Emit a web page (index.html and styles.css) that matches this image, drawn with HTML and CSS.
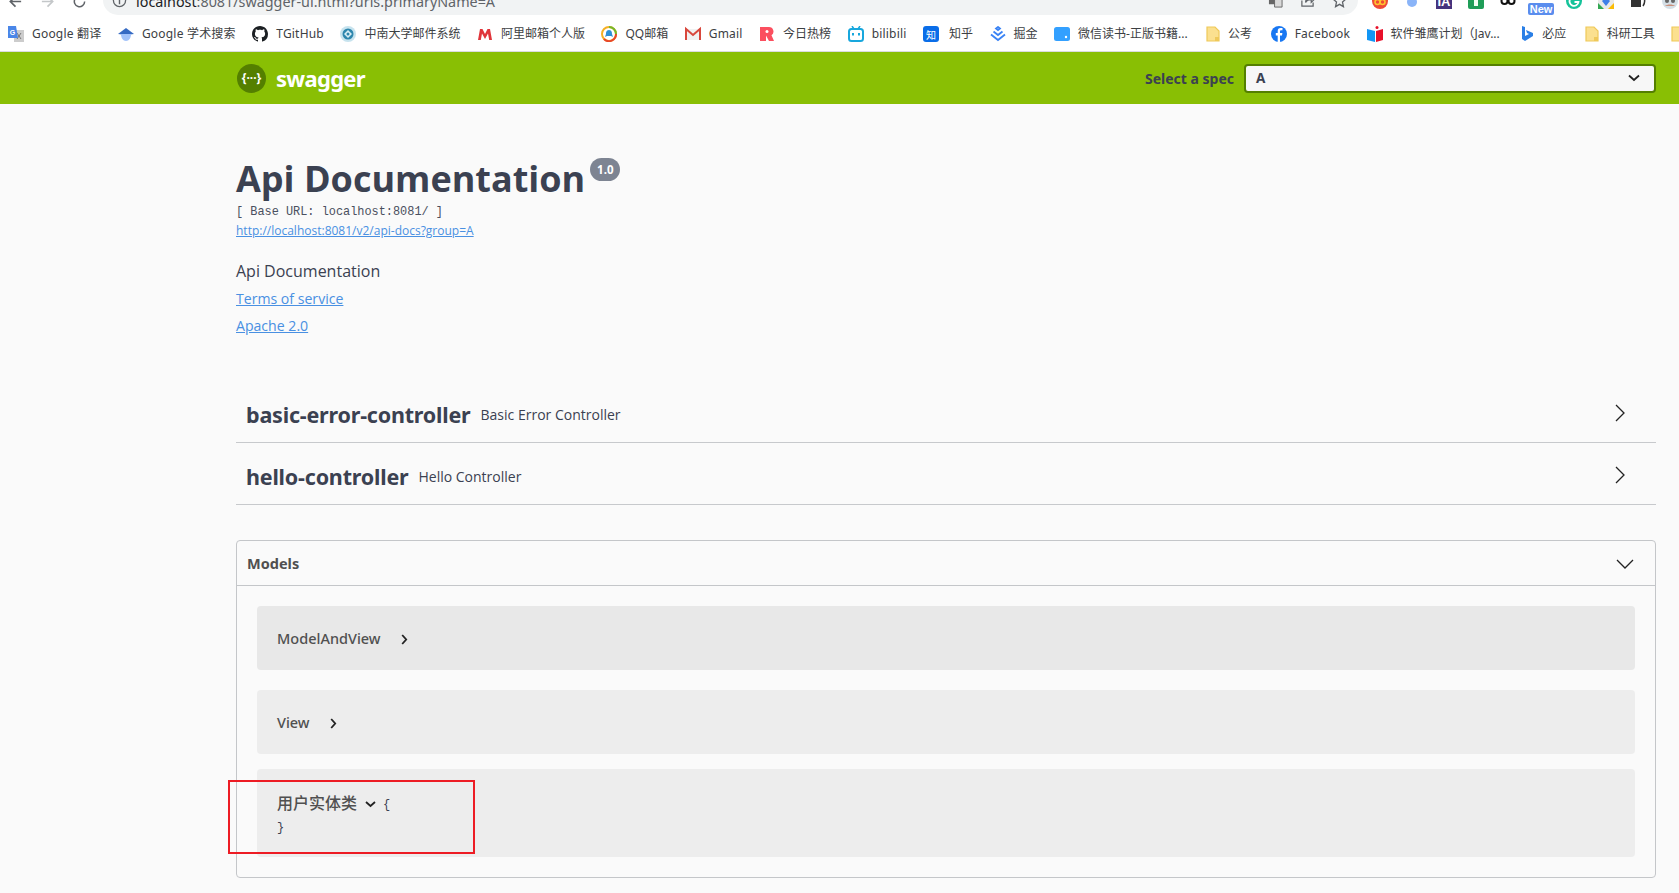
FILE: index.html
```html
<!DOCTYPE html>
<html lang="zh">
<head>
<meta charset="utf-8">
<title>Swagger UI</title>
<link rel="stylesheet" href="styles.css">
</head>
<body>
<svg class="defs" width="0" height="0" aria-hidden="true">
  <symbol id="folder" viewBox="0 0 14 16"><path d="M1 1h8l4 4v10H1z" fill="#fbe08f" stroke="#efc95a" stroke-width="1.2"/><path d="M9 11h4v4H9z" fill="#efc95a"/></symbol>
</svg>

<div class="toolbar">
  <div class="nav">
    <svg class="nav-icon" viewBox="0 0 16 16"><path d="M14 8H3M8 2.500 2.500 8 8 13.500" fill="none" stroke="#5f6368" stroke-width="1.800"/></svg>
    <svg class="nav-icon" viewBox="0 0 16 16"><path d="M2 8h11M8 2.500 13.500 8 8 13.500" fill="none" stroke="#c4c7c9" stroke-width="1.800"/></svg>
    <svg class="nav-icon" viewBox="0 0 16 16"><path d="M13.500 8a5.500 5.500 0 1 1-1.600-3.900" fill="none" stroke="#5f6368" stroke-width="1.600"/><path d="M14 1v5H9z" fill="#5f6368"/></svg>
  </div>
  <div class="omnibox">
    <svg class="info-icon" viewBox="0 0 16 16"><circle cx="8" cy="8" r="6.500" fill="none" stroke="#5f6368" stroke-width="1.400"/><path d="M8 7v5M8 4v1.500" stroke="#5f6368" stroke-width="1.500"/></svg>
    <span class="url"><b class="url-host">localhost</b>:8081/swagger-ui.html?urls.primaryName=A</span>
    <span class="omni-actions">
      <svg class="nav-icon" viewBox="0 0 16 16"><path d="M1 1h9v11H1z" fill="#666"/><path d="M7 5h8v10H7z" fill="#d9d9d9" stroke="#666"/></svg>
      <svg class="nav-icon" viewBox="0 0 16 16"><path d="M2 8v6h12v-4M6 10c0-4 3-5 6-5V2l4 4-4 4V7c-3 0-5 1-6 3z" fill="none" stroke="#5f6368" stroke-width="1.300"/></svg>
      <svg class="nav-icon" viewBox="0 0 16 16"><path d="m8 1.500 2 4.500 4.800.500-3.600 3.200 1 4.800L8 12.100l-4.200 2.400 1-4.800L1.200 6.500 6 6z" fill="none" stroke="#5f6368" stroke-width="1.400"/></svg>
    </span>
  </div>
  <div class="extensions">
    <svg class="ext" viewBox="0 0 16 16"><circle cx="8" cy="8" r="8" fill="#ef4a36"/><circle cx="5.500" cy="9" r="2.500" fill="none" stroke="#ffc52f" stroke-width="1.500"/><circle cx="10.500" cy="9" r="2.500" fill="none" stroke="#ffc52f" stroke-width="1.500"/></svg>
    <svg class="ext" viewBox="0 0 16 16"><path d="M1 3h14L11 8H5z" fill="#3f7fe8"/><circle cx="8" cy="9" r="5" fill="#8ab4f8"/></svg>
    <svg class="ext" viewBox="0 0 16 16"><rect width="16" height="16" fill="#46337d"/><text x="8" y="13" class="ext-text">IA</text></svg>
    <svg class="ext" viewBox="0 0 16 16"><rect width="16" height="16" rx="2" fill="#1f9d57"/><rect x="6" y="2" width="4" height="11" fill="#f2fff2"/></svg>
    <svg class="ext" viewBox="0 0 16 16"><circle cx="4.500" cy="8" r="4" fill="#111"/><circle cx="11.500" cy="8" r="4" fill="#111"/><rect x="2" y="2" width="12" height="3" fill="#111"/><circle cx="4.500" cy="8" r="2" fill="#fff"/><circle cx="11.500" cy="8" r="2" fill="#fff"/></svg>
    <span class="new-badge">New</span>
    <svg class="ext" viewBox="0 0 16 16"><circle cx="8" cy="8" r="8" fill="#15c39a"/><path d="M11.500 5.500A4.500 4.500 0 1 0 12.500 9H8.500" fill="none" stroke="#fff" stroke-width="1.800"/></svg>
    <svg class="ext" viewBox="0 0 16 16"><rect width="16" height="16" fill="#e9e9e9"/><path d="M0 10 6 16H0z" fill="#34a853"/><path d="M10 16 16 10V16z" fill="#fbbc05"/><path d="m8 4 4 4-4 5-4-5z" fill="#3f7fe8"/><path d="M0 0v6L6 0z" fill="#34a853"/><path d="M16 0v6L10 0z" fill="#34a853"/></svg>
    <svg class="ext" viewBox="0 0 16 16"><path d="M1 3h10v11H1z" fill="#333"/><path d="M13 3c2 3 2 7 0 10" fill="none" stroke="#333" stroke-width="1.500"/></svg>
    <svg class="ext" viewBox="0 0 16 16"><circle cx="8" cy="8" r="8" fill="#d5dfe6"/><circle cx="5" cy="8" r="2" fill="#666"/><circle cx="11" cy="8" r="2" fill="#666"/><path d="M3 13c2-2 8-2 10 0z" fill="#c98f7a"/></svg>
  </div>
</div>

<nav class="bookmarks">
  <a class="bm"><svg class="bm-icon" viewBox="0 0 16 16"><rect x="6" y="4" width="10" height="12" fill="#ccc"/><path d="m9 7 4 6M13 7l-4 6" stroke="#777"/><path d="M0 0h8l2 12H0z" fill="#4a86e8"/><text x="4.500" y="9" class="g-text">G</text></svg><span>Google 翻译</span></a>
  <a class="bm"><svg class="bm-icon" viewBox="0 0 16 16"><path d="M8 2 16 8 8 9 0 8z" fill="#356ac3"/><path d="M3 8h10c0 4-2 7-5 7s-5-3-5-7z" fill="#a1c2fa"/></svg><span>Google 学术搜索</span></a>
  <a class="bm"><svg class="bm-icon" viewBox="0 0 16 16"><path fill="#1b1f23" d="M8 0C3.580 0 0 3.580 0 8c0 3.540 2.290 6.530 5.470 7.590.4.070.55-.17.55-.38 0-.19-.01-.82-.01-1.490-2.010.37-2.530-.49-2.690-.94-.09-.23-.48-.94-.82-1.130-.28-.15-.68-.52-.01-.53.63-.01 1.080.58 1.230.82.720 1.210 1.870.87 2.330.66.070-.52.280-.87.510-1.070-1.780-.2-3.640-.89-3.640-3.950 0-.87.310-1.590.820-2.150-.080-.2-.360-1.020.080-2.120 0 0 .670-.21 2.200.820.640-.18 1.320-.27 2-.27s1.360.090 2 .270c1.530-1.040 2.200-.820 2.200-.820.440 1.100.160 1.920.080 2.120.510.560.820 1.270.820 2.150 0 3.070-1.870 3.750-3.650 3.950.290.250.540.730.540 1.480 0 1.070-.010 1.930-.010 2.200 0 .210.150.460.550.380A8.010 8.010 0 0 0 16 8c0-4.420-3.580-8-8-8z"/></svg><span>TGitHub</span></a>
  <a class="bm bm-cjk"><svg class="bm-icon" viewBox="0 0 16 16"><circle cx="8" cy="8" r="8" fill="#c7e3ee"/><circle cx="8" cy="8" r="5.500" fill="#2d86ad"/><path d="m8 4 4 4-4 4-4-4z" fill="#d7edf5"/><circle cx="8" cy="8" r="1.500" fill="#2d86ad"/></svg><span>中南大学邮件系统</span></a>
  <a class="bm bm-cjk"><svg class="bm-icon" viewBox="0 0 16 16"><path d="M1 14 3 3h2.500L8 8l2.500-5H13l2 11h-2.800L11 7.500 8 13 5 7.500 3.800 14z" fill="#e0353b"/></svg><span>阿里邮箱个人版</span></a>
  <a class="bm bm-cjk"><svg class="bm-icon" viewBox="0 0 16 16"><circle cx="8" cy="8" r="7" fill="none" stroke="#f5b024" stroke-width="2"/><path d="M8 1a7 7 0 0 1 7 7" fill="none" stroke="#76b82a" stroke-width="2"/><path d="M15 8a7 7 0 0 1-12 5" fill="none" stroke="#e8462a" stroke-width="2"/><path d="M8 4c3 0 3 3 3 4l1 3-2-1H6l-2 1 1-3c0-1 0-4 3-4z" fill="#2d8fd5"/></svg><span>QQ邮箱</span></a>
  <a class="bm"><svg class="bm-icon" viewBox="0 0 16 16"><path d="M1 3h14v11H1z" fill="#f1f1f1"/><path d="M1 14V3l7 6 7-6v11" fill="none" stroke="#d8473c" stroke-width="2"/></svg><span>Gmail</span></a>
  <a class="bm bm-cjk"><svg class="bm-icon" viewBox="0 0 16 16"><path d="M1 1h9a4.500 4.500 0 0 1 2.500 8.200L15 15h-5L7 9.500V15H1z" fill="#fb4f5f"/><circle cx="8" cy="5.500" r="1.500" fill="#fff"/></svg><span>今日热榜</span></a>
  <a class="bm"><svg class="bm-icon" viewBox="0 0 16 16"><path d="m4 0 2 3h4l2-3" fill="none" stroke="#18a7dd" stroke-width="1.500"/><rect x="1" y="3" width="14" height="12" rx="2.500" fill="none" stroke="#18a7dd" stroke-width="2"/><path d="M5 7v2.500M11 7v2.500" stroke="#18a7dd" stroke-width="2"/></svg><span>bilibili</span></a>
  <a class="bm bm-cjk"><svg class="bm-icon" viewBox="0 0 16 16"><rect width="16" height="16" rx="3" fill="#0a6de8"/><text x="8" y="12.500" class="zhi-text">知</text></svg><span class="bm-wide">知乎</span></a>
  <a class="bm bm-cjk"><svg class="bm-icon" viewBox="0 0 16 16"><path d="m8 1 2 1.600L8 4.200 6 2.600zM3.500 5.500 8 9l4.500-3.500M1 8.500 8 14l7-5.500" fill="none" stroke="#3a83f5" stroke-width="1.800"/></svg><span>掘金</span></a>
  <a class="bm bm-cjk"><svg class="bm-icon" viewBox="0 0 16 16"><rect width="16" height="14" y="1" rx="2.500" fill="#33a0ff"/><circle cx="12" cy="11" r="1.200" fill="#fff"/></svg><span>微信读书-正版书籍...</span></a>
  <a class="bm bm-cjk bm-shift"><svg class="bm-icon bm-folder"><use href="#folder"/></svg><span>公考</span></a>
  <a class="bm bm-shift"><svg class="bm-icon" viewBox="0 0 16 16"><circle cx="8" cy="8" r="8" fill="#1877f2"/><path d="M9 16V9.500h2l.400-2.500H9V5.500c0-.8.300-1.300 1.300-1.300h1.200V2h-1.900C7.700 2 6.700 3.200 6.700 5.200V7H4.800v2.500h1.900V16z" fill="#fff"/></svg><span>Facebook</span></a>
  <a class="bm bm-cjk"><svg class="bm-icon" viewBox="0 0 16 16"><path d="M0 3 8 5v11L0 14z" fill="#1296f5"/><path d="M9 5l7-2v11l-7 2z" fill="#e8102a"/><circle cx="10" cy="1.500" r="1.500" fill="#e8102a"/></svg><span>软件雏鹰计划（Jav...</span></a>
  <a class="bm bm-cjk bm-shift-more"><svg class="bm-icon bm-folder" viewBox="0 0 12 16"><path d="M1 0l3 1v9l4-2-2-1-1-3 7 3v3l-8 5-3-2z" fill="#2a7fe6"/></svg><span>必应</span></a>
  <a class="bm bm-cjk bm-shift"><svg class="bm-icon bm-folder"><use href="#folder"/></svg><span>科研工具</span></a>
  <a class="bm"><svg class="bm-icon bm-folder"><use href="#folder"/></svg></a>
</nav>

<header class="topbar">
  <div class="logo"><span class="logo-mark">{···}</span><span class="logo-word">swagger</span></div>
  <div class="spec">
    <label class="spec-label">Select a spec</label>
    <div class="spec-select"><span class="spec-value">A</span>
      <svg class="spec-caret" viewBox="0 0 12 8"><path d="M1 1.500 6 6l5-4.500" fill="none" stroke="#222" stroke-width="1.800"/></svg>
    </div>
  </div>
</header>

<main class="page">
  <section class="info">
    <h2 class="title">Api Documentation<span class="version">1.0</span></h2>
    <pre class="base-url">[ Base URL: localhost:8081/ ]</pre>
    <a class="link link-small">http://localhost:8081/v2/api-docs?group=A</a>
    <p class="desc">Api Documentation</p>
    <p class="info-line"><a class="link">Terms of service</a></p>
    <p class="info-line"><a class="link">Apache 2.0</a></p>
  </section>

  <section class="tags">
    <div class="tag">
      <h4 class="tag-name">basic-error-controller</h4><small class="tag-desc">Basic Error Controller</small>
      <svg class="tag-arrow" viewBox="0 0 10 18"><path d="m1 1 8 8-8 8" fill="none" stroke="#222" stroke-width="1.300"/></svg>
    </div>
    <div class="tag">
      <h4 class="tag-name">hello-controller</h4><small class="tag-desc">Hello Controller</small>
      <svg class="tag-arrow" viewBox="0 0 10 18"><path d="m1 1 8 8-8 8" fill="none" stroke="#222" stroke-width="1.300"/></svg>
    </div>
  </section>

  <section class="models">
    <div class="models-head">
      <h4 class="models-title">Models</h4>
      <svg class="models-arrow" viewBox="0 0 18 10"><path d="m1 1 8 8 8-8" fill="none" stroke="#222" stroke-width="1.300"/></svg>
    </div>
    <div class="models-body">
      <div class="model model-first">
        <span class="model-name">ModelAndView</span>
        <svg class="model-right model-right-wide" viewBox="0 0 7 11"><path d="m1.200 1 4 4.500-4 4.500" fill="none" stroke="#222" stroke-width="1.800"/></svg>
      </div>
      <div class="model">
        <span class="model-name">View</span>
        <svg class="model-right model-right-wide" viewBox="0 0 7 11"><path d="m1.200 1 4 4.500-4 4.500" fill="none" stroke="#222" stroke-width="1.800"/></svg>
      </div>
      <div class="model model-open">
        <div class="model-open-line">
          <span class="model-name model-name-cjk">用户实体类</span>
          <svg class="model-down" viewBox="0 0 11 7"><path d="m1 1 4.500 4L10 1" fill="none" stroke="#222" stroke-width="1.800"/></svg>
          <span class="brace">{</span>
        </div>
        <div class="brace brace-end">}</div>
        <div class="highlight"></div>
      </div>
    </div>
  </section>
</main>
</body>
</html>
```
FILE: styles.css
```css
* { box-sizing: border-box; }
html, body { margin: 0; padding: 0; }
body {
  width: 1679px;
  height: 893px;
  overflow: hidden;
  background: #fafafa;
  color: #3b4151;
  font-family: "Open Sans", "Noto Sans CJK SC", sans-serif;
}
.defs { position: absolute; }

/* browser toolbar */
.toolbar {
  display: flex;
  align-items: flex-end;
  height: 15px;
  overflow: hidden;
  background: #fff;
}
.nav { display: flex; gap: 17px; padding: 0 0 6px 8px; width: 103px; flex: none; }
.nav-icon { width: 15px; height: 15px; flex: none; }
.omnibox {
  display: flex;
  align-items: flex-end;
  width: 1255px;
  height: 15px;
  flex: none;
  padding: 0 11px 7px 9px;
  background: #f1f3f4;
  border-radius: 0 0 16px 16px;
}
.info-icon { width: 15px; height: 15px; flex: none; margin-right: 9px; }
.url {
  font: 14.350px/20px "Noto Sans", sans-serif;
  color: #5f6368;
  margin-bottom: -4px;
  white-space: nowrap;
}
.url-host { font-weight: 400; color: #202124; }
.omni-actions { display: flex; gap: 17px; margin-left: auto; }
.extensions { display: flex; align-items: flex-end; gap: 16px; padding: 0 0 6px 14px; flex: none; }
.ext { width: 16px; height: 16px; flex: none; }
.ext-text { font: bold 13px "Liberation Sans", sans-serif; fill: #fff; text-anchor: middle; }
.new-badge {
  margin: 0 -4px -6px -4px;
  width: 26px;
  height: 12px;
  border-radius: 2px;
  background: #5a8dee;
  color: #fff;
  font: bold 11px/12px "Liberation Sans", sans-serif;
  text-align: center;
  flex: none;
}

/* bookmarks */
.bookmarks {
  display: flex;
  align-items: center;
  gap: 16.500px;
  height: 37px;
  padding: 1px 0 0 8px;
  background: #fff;
  border-bottom: 1px solid #dadce0;
  overflow: hidden;
  white-space: nowrap;
}
.bm {
  display: flex;
  align-items: center;
  gap: 8px;
  flex: none;
  font: 12px/16px "Noto Sans", "Noto Sans CJK SC", sans-serif;
  letter-spacing: .2px;
  color: #3c4043;
}
.bm-cjk { letter-spacing: 0; }
.bm-shift { margin-left: 2px; }
.bm-shift-more { margin-left: 4px; }
.bm-icon { width: 16px; height: 16px; flex: none; }
.bm-folder { width: 14px; }
.bm-wide { margin-left: 2px; }
.g-text { font: bold 7px "Liberation Sans", sans-serif; fill: #fff; text-anchor: middle; }
.zhi-text { font: 10px "Noto Sans CJK SC", sans-serif; fill: #fff; text-anchor: middle; }

/* swagger topbar */
.topbar {
  display: flex;
  align-items: center;
  justify-content: space-between;
  height: 52px;
  padding: 0 23px 0 237px;
  background: #89bf04;
}
.logo { display: flex; align-items: center; gap: 10px; }
.logo-mark {
  display: flex;
  align-items: center;
  justify-content: center;
  width: 29px;
  height: 29px;
  border-radius: 50%;
  background: #547f00;
  color: #fff;
  font: bold 12px/1 "Noto Sans", sans-serif;
}
.logo-word {
  font: 700 22px/1 "Noto Sans", sans-serif;
  letter-spacing: -.7px;
  color: #fff;
}
.spec { display: flex; align-items: center; gap: 10px; }
.spec-label {
  margin-top: 1px;
  font: 700 14px/1 "Noto Sans", sans-serif;
  color: #3b4151;
}
.spec-select {
  display: flex;
  align-items: center;
  justify-content: space-between;
  width: 412px;
  height: 29px;
  padding: 0 14px 0 10px;
  border: 2px solid #547f00;
  border-radius: 4px;
  background: #f7f7f7;
  font: 700 13.500px/1 "Noto Sans", sans-serif;
  color: #3b4151;
}
.spec-value { margin-top: 1px; }
.spec-caret { width: 12px; height: 8px; }

/* page */
.page { padding: 0 23px 0 236px; }
.info { padding-top: 49px; height: 277px; }
.title {
  margin: 0;
  font: 700 36px/51px "Open Sans", sans-serif;
  color: #3b4151;
  display: flex;
  align-items: flex-start;
}
.version {
  margin: 5px 0 0 5px;
  padding: 0 6px;
  height: 23px;
  min-width: 30px;
  border-radius: 12px;
  background: #7d8492;
  color: #fff;
  font: 700 11.500px/23px "Open Sans", sans-serif;
  text-align: center;
}
.base-url {
  margin: 0;
  font: 11.900px/16px "Liberation Mono", monospace;
  color: #4a5060;
}
.link { color: #4990e2; text-decoration: underline; font-size: 14.100px; }
.link-small { display: block; margin-top: 3px; font-size: 12px; line-height: 16px; }
.desc { margin: 21px 0 0; font-size: 16px; line-height: 22px; }
.info-line { margin: 6px 0 0; line-height: 21px; }

.tag {
  display: flex;
  align-items: center;
  height: 62px;
  padding: 6px 10px 0;
  border-bottom: 1px solid #c7c9cc;
}
.tag-name {
  margin: 0;
  font: 700 21.500px/1 "Noto Sans", sans-serif;
  letter-spacing: -.2px;
  color: #3b4151;
}
.tag-desc { margin-left: 10px; font-size: 14px; color: #3b4151; }
.tag-arrow { width: 10px; height: 18px; margin: -3px 21px 0 auto; }

.models {
  margin-top: 35px;
  height: 338px;
  border: 1px solid #c4c6c9;
  border-radius: 4px;
}
.models-head {
  display: flex;
  align-items: center;
  justify-content: space-between;
  height: 45px;
  padding: 0 21px 0 10px;
  border-bottom: 1px solid #c4c6c9;
}
.models-title { margin: 0; font: 700 14.500px/1 "Noto Sans", sans-serif; color: #505050; }
.models-arrow { width: 18px; height: 10px; margin-top: 2px; }
.models-body { padding: 20px 20px 0; }
.model {
  display: flex;
  align-items: center;
  height: 64px;
  margin-bottom: 20px;
  padding: 0 20px;
  background: #ededed;
  border-radius: 4px;
}
.model-first { background: #e8e8e8; }
.model-name { font: 500 14.500px/1 "Noto Sans", "Noto Sans CJK SC", sans-serif; color: #505050; }
.model-name-cjk { font-size: 16px; }
.model-right { width: 7px; height: 11px; flex: none; }
.model-right-wide { margin: 3px 0 0 20px; }
.model-open {
  position: relative;
  display: block;
  height: 88px;
  margin-top: -5px;
  padding-top: 21px;
}
.model-open-line { display: flex; align-items: center; height: 26px; }
.model-down { width: 11px; height: 7px; margin: 2px 7px 0 8px; }
.brace { font: 12px/16px "Liberation Mono", monospace; color: #3b4151; margin-top: 4px; }
.brace-end { margin-top: 4px; }
.highlight {
  position: absolute;
  left: -29px;
  top: 11px;
  width: 247px;
  height: 74px;
  border: 2.500px solid #ed1c24;
}
```
